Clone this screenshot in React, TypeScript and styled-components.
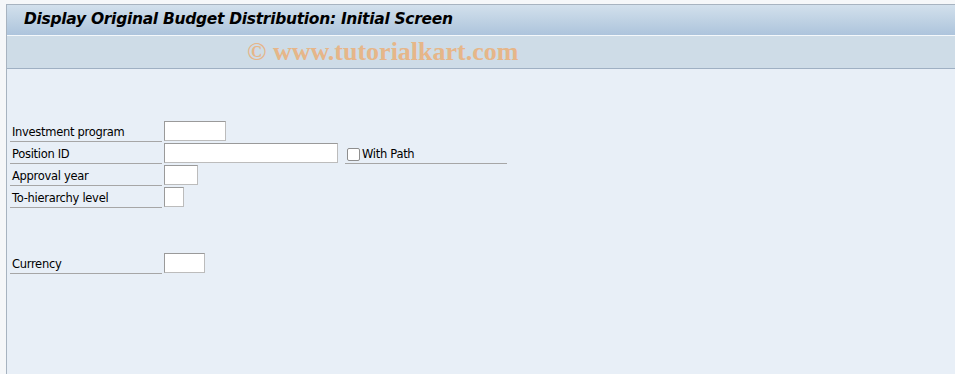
import React from 'react'
import styled, { createGlobalStyle } from 'styled-components'

const GlobalStyle = createGlobalStyle`
  html, body {
    margin: 0;
    padding: 0;
    background: #f5f7f9;
  }
  body {
    font-family: Tahoma, 'DejaVu Sans', 'Liberation Sans', sans-serif;
  }
`

const Frame = styled.div`
  width: 949px;
  height: 370px;
  margin: 4px 0 0 6px;
  border-left: 1px solid #a7b3c0;
  border-top: 1px solid #a7b3c0;
  display: flex;
  flex-direction: column;
  background: #e8eff7;
  overflow: hidden;
`

const TitleBar = styled.div`
  height: 31px;
  box-sizing: border-box;
  background: linear-gradient(#d2e0ec, #adc4dc);
  border-bottom: 1px solid #f4f8fb;
  display: flex;
  align-items: center;
  padding: 0 0 2px 17px;
`

const Title = styled.h1`
  margin: 0;
  font-size: 15.5px;
  font-weight: bold;
  font-style: italic;
  color: #000;
  font-family: 'DejaVu Sans', Verdana, sans-serif;
  letter-spacing: -0.3px;
`

const Toolbar = styled.div`
  height: 32px;
  background: #cedce7;
  border-bottom: 1px solid #9fb0c3;
  display: flex;
  align-items: center;
  padding-left: 240px;
`

const Watermark = styled.span`
  font-family: 'Liberation Serif', 'DejaVu Serif', serif;
  font-weight: bold;
  font-size: 26px;
  color: #e9b27f;
  opacity: 0.9;
`

const Body = styled.div`
  flex: 1;
  padding: 51px 0 0 3px;
  display: flex;
  flex-direction: column;
`

const Row = styled.div<{ gapTop?: number }>`
  display: flex;
  align-items: center;
  height: 22px;
  margin-top: ${(p) => p.gapTop ?? 0}px;
`

const Label = styled.div`
  width: 152px;
  height: 22px;
  box-sizing: border-box;
  border-bottom: 1px solid #a6a6a6;
  font-family: 'DejaVu Sans', sans-serif;
  font-size: 11.5px;
  color: #000;
  padding: 3px 0 0 2px;
  display: flex;
  align-items: center;
  letter-spacing: -0.3px;
`

const Field = styled.div<{ w: number }>`
  width: ${(p) => p.w}px;
  height: 20px;
  box-sizing: border-box;
  margin-left: 2px;
  background: #fff;
  border: 1px solid #bcbcbc;
  border-top-color: #9a9a9a;
  border-left-color: #9a9a9a;
`

const Extra = styled.div`
  width: 162px;
  height: 22px;
  margin-left: 7px;
  box-sizing: border-box;
  border-bottom: 1px solid #a6a6a6;
  display: flex;
  align-items: center;
  gap: 2px;
  padding: 3px 0 0 2px;
  font-family: 'DejaVu Sans', sans-serif;
  font-size: 11.5px;
  letter-spacing: -0.3px;
`

const Check = styled.div`
  width: 13px;
  height: 13px;
  box-sizing: border-box;
  background: #fff;
  border: 1px solid #8e8e8e;
  border-radius: 2px;
`

export default function App() {
  return (
    <>
      <GlobalStyle />
      <Frame>
        <TitleBar>
          <Title>Display Original Budget Distribution: Initial Screen</Title>
        </TitleBar>
        <Toolbar>
          <Watermark>© www.tutorialkart.com</Watermark>
        </Toolbar>
        <Body>
          <Row>
            <Label>Investment program</Label>
            <Field w={62} />
          </Row>
          <Row>
            <Label>Position ID</Label>
            <Field w={174} />
            <Extra>
              <Check />
              With Path
            </Extra>
          </Row>
          <Row>
            <Label>Approval year</Label>
            <Field w={34} />
          </Row>
          <Row>
            <Label>To-hierarchy level</Label>
            <Field w={20} />
          </Row>
          <Row gapTop={44}>
            <Label>Currency</Label>
            <Field w={41} />
          </Row>
        </Body>
      </Frame>
    </>
  )
}
